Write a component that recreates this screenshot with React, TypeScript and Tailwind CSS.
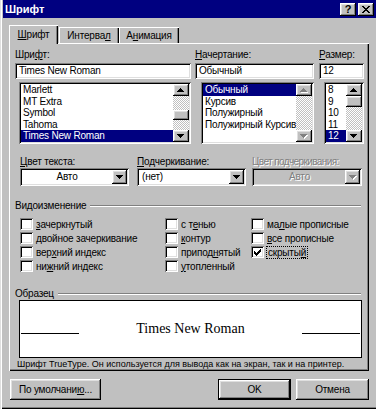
import React from "react";

const raised =
  "bg-[#c0c0c0] shadow-[inset_-1px_-1px_#000,inset_1px_1px_#fff,inset_-2px_-2px_#808080,inset_2px_2px_#dfdfdf]";
const sunken =
  "shadow-[inset_1px_1px_#808080,inset_-1px_-1px_#fff,inset_2px_2px_#000,inset_-2px_-2px_#dfdfdf]";
const checker =
  "bg-[image:repeating-conic-gradient(#c0c0c0_0%_25%,#fff_0%_50%)] bg-[length:2px_2px]";
const embossed = "text-[#808080] [text-shadow:1px_1px_#fff]";

// "&" marks the accelerator letter
const Acc = ({ text }: { text: string }) => {
  const i = text.indexOf("&");
  if (i < 0) return <>{text}</>;
  return (
    <>
      {text.slice(0, i)}
      <span className="underline underline-offset-[1px]">{text[i + 1]}</span>
      {text.slice(i + 2)}
    </>
  );
};

const downPath = "M0 0h7v1H0zM1 1h5v1H1zM2 2h3v1H2zM3 3h1v1H3z";
const upPath = "M3 0h1v1H3zM2 1h3v1H2zM1 2h5v1H1zM0 3h7v1H0z";

const Arrow = ({ up = false, off = false }: { up?: boolean; off?: boolean }) => (
  <svg width="8" height="5" viewBox="0 0 8 5" shapeRendering="crispEdges">
    {off && <path d={up ? upPath : downPath} fill="#fff" transform="translate(1 1)" />}
    <path d={up ? upPath : downPath} fill={off ? "#808080" : "#000"} />
  </svg>
);

const ScrollBar = ({ thumb, off }: { thumb?: string; off?: boolean }) => (
  <div className="w-[16px] h-full flex flex-col shrink-0">
    <div className={`h-[12px] shrink-0 flex items-center justify-center ${raised}`}>
      <Arrow up off={off} />
    </div>
    <div className={`flex-1 ${checker}`}>
      {thumb && <div className={`${thumb} ${raised}`} />}
    </div>
    <div className={`h-[12px] shrink-0 flex items-center justify-center ${raised}`}>
      <Arrow off={off} />
    </div>
  </div>
);

const ListBox = ({
  items,
  sel,
  cls,
  thumb,
  off,
}: {
  items: string[];
  sel: number;
  cls: string;
  thumb?: string;
  off?: boolean;
}) => (
  <div className={`${cls} h-[62px] bg-white ${sunken} p-[2px] flex`}>
    <div className="flex-1 min-w-0 flex flex-col overflow-hidden">
      {items.map((t, i) => (
        <div
          key={t}
          className={`h-[11.6px] leading-[11.6px] pl-[2px] whitespace-nowrap ${
            i === sel ? "bg-[#000080] text-white" : ""
          }`}
        >
          {t}
        </div>
      ))}
    </div>
    <ScrollBar thumb={thumb} off={off} />
  </div>
);

const Combo = ({
  value,
  cls,
  center,
  off,
}: {
  value: string;
  cls: string;
  center?: boolean;
  off?: boolean;
}) => (
  <div className={`${cls} h-[18px] ${sunken} p-[2px] flex ${off ? "bg-[#c0c0c0]" : "bg-white"}`}>
    <div
      className={`flex-1 leading-[14px] ${center ? "text-center" : "pl-[3px]"} ${off ? embossed : ""}`}
    >
      {value}
    </div>
    <div className={`w-[15px] flex items-center justify-center ${raised}`}>
      <Arrow off={off} />
    </div>
  </div>
);

const Check = ({ label, checked, focus }: { label: string; checked?: boolean; focus?: boolean }) => (
  <div className="h-[14px] flex items-center">
    <div className={`w-[13px] h-[12px] bg-white ${sunken} flex items-center justify-center shrink-0`}>
      {checked && (
        <svg width="7" height="7" viewBox="0 0 7 7" shapeRendering="crispEdges">
          <path
            d="M6 0h1v1H6zM5 1h2v1H5zM0 2h1v1H0zM4 2h3v1H4zM0 3h2v1H0zM3 3h3v1H3zM0 4h5v1H0zM1 5h3v1H1zM2 6h1v1H2z"
            fill="#000"
          />
        </svg>
      )}
    </div>
    <span
      className={`ml-[3px] leading-[11px] whitespace-nowrap ${
        focus ? "outline outline-1 outline-dotted outline-black px-[1px]" : ""
      }`}
    >
      <Acc text={label} />
    </span>
  </div>
);

const Group = ({ title, cls }: { title: string; cls: string }) => (
  <div className={`flex items-center ml-[6px] w-[346px] h-[12px] ${cls}`}>
    <span className="leading-[12px]">{title}</span>
    <div className="flex-1 ml-[4px] h-[2px] border-t border-t-[#808080] border-b border-b-white" />
  </div>
);

const Btn = ({ children, cls, def }: { children: React.ReactNode; cls: string; def?: boolean }) => (
  <div className={`${cls} h-[21px] ${def ? "border border-black" : ""}`}>
    <div className={`w-full h-full flex items-center justify-center ${raised}`}>{children}</div>
  </div>
);

const Field = ({ value, cls }: { value: string; cls: string }) => (
  <div className={`${cls} h-[16px] bg-white ${sunken} pl-[4px] leading-[16px]`}>{value}</div>
);

const App = () => {
  return (
    <div className="w-[376px] h-[409px] bg-[#c0c0c0] font-['Liberation_Sans',Arial,sans-serif] text-[10px] tracking-[-0.2px] text-black pl-[3px] flex flex-col select-none shadow-[inset_1px_0_#dfdfdf,inset_2px_0_#fff,inset_0_-1px_#000,inset_0_-2px_#808080]">
      {/* title bar */}
      <div className="h-[18px] shrink-0 bg-[#000080] flex items-center justify-between pl-[2px] pr-[2px]">
        <span className="text-white font-bold text-[11px] leading-[18px] tracking-normal">Шрифт</span>
        <div className="flex gap-[2px]">
          <div className={`w-[16px] h-[13px] flex items-center justify-center font-bold text-[11px] ${raised}`}>
            ?
          </div>
          <div className={`w-[16px] h-[13px] flex items-center justify-center ${raised}`}>
            <svg width="8" height="7" viewBox="0 0 8 7" shapeRendering="crispEdges">
              <path
                d="M0 0h2v1H0zM6 0h2v1H6zM1 1h2v1H1zM5 1h2v1H5zM2 2h4v1H2zM3 3h2v1H3zM2 4h4v1H2zM1 5h2v1H1zM5 5h2v1H5zM0 6h2v1H0zM6 6h2v1H6z"
                fill="#000"
              />
            </svg>
          </div>
        </div>
      </div>

      {/* tabs */}
      <div className="mt-[7px] ml-[6px] h-[18px] flex items-end relative z-10">
        <div className="w-[49px] h-[19px] -mb-px bg-[#c0c0c0] flex items-center justify-center pb-[1px] shadow-[inset_1px_1px_#fff,inset_-1px_0_#000,inset_-2px_0_#808080]">
          <Acc text="&Шрифт" />
        </div>
        <div className="ml-[1px] w-[60px] h-[16px] flex items-center justify-center shadow-[inset_1px_1px_#fff,inset_-1px_0_#000,inset_-2px_0_#808080]">
          <Acc text="Интерва&л" />
        </div>
        <div className="w-[60px] h-[16px] flex items-center justify-center shadow-[inset_1px_1px_#fff,inset_-1px_0_#000,inset_-2px_0_#808080]">
          <Acc text="А&нимация" />
        </div>
      </div>

      {/* tab panel */}
      <div className="ml-[6px] w-[360px] h-[328px] shrink-0 flex flex-col pt-[6px] shadow-[inset_1px_1px_#fff,inset_-1px_-1px_#000,inset_-2px_-2px_#808080]">
        <div className="flex ml-[6px]">
          <div className="w-[176px] flex flex-col">
            <div className="h-[12px] leading-[12px]">
              <Acc text="Шри&фт:" />
            </div>
            <Field value="Times New Roman" cls="mt-[2px] w-full" />
            <ListBox
              cls="mt-[3px] ml-[4px] w-[172px]"
              items={["Marlett", "MT Extra", "Symbol", "Tahoma", "Times New Roman"]}
              sel={4}
              thumb="mt-[14px] h-[10px]"
            />
          </div>
          <div className="ml-[4px] w-[119px] flex flex-col">
            <div className="h-[12px] leading-[12px]">
              <Acc text="&Начертание:" />
            </div>
            <Field value="Обычный" cls="mt-[2px] w-full" />
            <ListBox
              cls="mt-[3px] ml-[6px] w-[113px]"
              items={["Обычный", "Курсив", "Полужирный", "Полужирный Курсив"]}
              sel={0}
              off
            />
          </div>
          <div className="ml-[5px] w-[45px] flex flex-col">
            <div className="h-[12px] leading-[12px]">
              <Acc text="&Размер:" />
            </div>
            <Field value="12" cls="mt-[2px] w-full" />
            <ListBox
              cls="mt-[3px] ml-[5px] w-[40px]"
              items={["8", "9", "10", "11", "12"]}
              sel={4}
              thumb="mt-0 h-[11px]"
            />
          </div>
        </div>

        {/* combos */}
        <div className="flex ml-[11px] mt-[12px]">
          <div className="w-[109px] flex flex-col">
            <div className="h-[12px] leading-[12px]">
              <Acc text="&Цвет текста:" />
            </div>
            <Combo value="Авто" cls="w-full" center />
          </div>
          <div className="ml-[8px] w-[109px] flex flex-col">
            <div className="h-[12px] leading-[12px]">
              <Acc text="&Подчеркивание:" />
            </div>
            <Combo value="(нет)" cls="w-full" />
          </div>
          <div className="ml-[6px] w-[110px] flex flex-col">
            <div className={`h-[12px] leading-[12px] whitespace-nowrap tracking-[-0.6px] ${embossed}`}>
              Цвет подчеркивания:
            </div>
            <Combo value="Авто" cls="w-full" center off />
          </div>
        </div>

        {/* effects */}
        <Group title="Видоизменение" cls="mt-[14px]" />
        <div className="flex ml-[11px] mt-[5px]">
          <div className="w-[145px] flex flex-col">
            <Check label="&зачеркнутый" />
            <Check label="&двойное зачеркивание" />
            <Check label="вер&хний индекс" />
            <Check label="ни&жний индекс" />
          </div>
          <div className="w-[86px] flex flex-col">
            <Check label="с т&енью" />
            <Check label="&контур" />
            <Check label="припод&нятый" />
            <Check label="&утопленный" />
          </div>
          <div className="flex flex-col">
            <Check label="ма&лые прописные" />
            <Check label="&все прописные" />
            <Check label="скрыты&й" checked focus />
          </div>
        </div>

        {/* sample */}
        <Group title="Образец" cls="mt-[15px]" />
        <div className="ml-[10px] w-[343px] h-[58px] bg-white border border-black flex items-center justify-between px-[1px]">
          <div className="w-[58px] h-px bg-black mt-[9px]" />
          <span className="font-['Liberation_Serif','Times_New_Roman',serif] text-[14px] leading-[16px] tracking-normal">
            Times New Roman
          </span>
          <div className="w-[58px] h-px bg-black mt-[9px]" />
        </div>
        <div className="ml-[8px] text-[9px] leading-[12px] tracking-normal whitespace-nowrap">
          Шрифт TrueType. Он используется для вывода как на экран, так и на принтер.
        </div>
      </div>

      {/* buttons */}
      <div className="flex mt-[8px]">
        <Btn cls="ml-[7px] w-[91px]">
          <Acc text="По умолчани&ю..." />
        </Btn>
        <Btn cls="ml-[117px] w-[73px]" def>
          OK
        </Btn>
        <Btn cls="ml-[5px] w-[73px]">Отмена</Btn>
      </div>
    </div>
  );
};

export default App;
